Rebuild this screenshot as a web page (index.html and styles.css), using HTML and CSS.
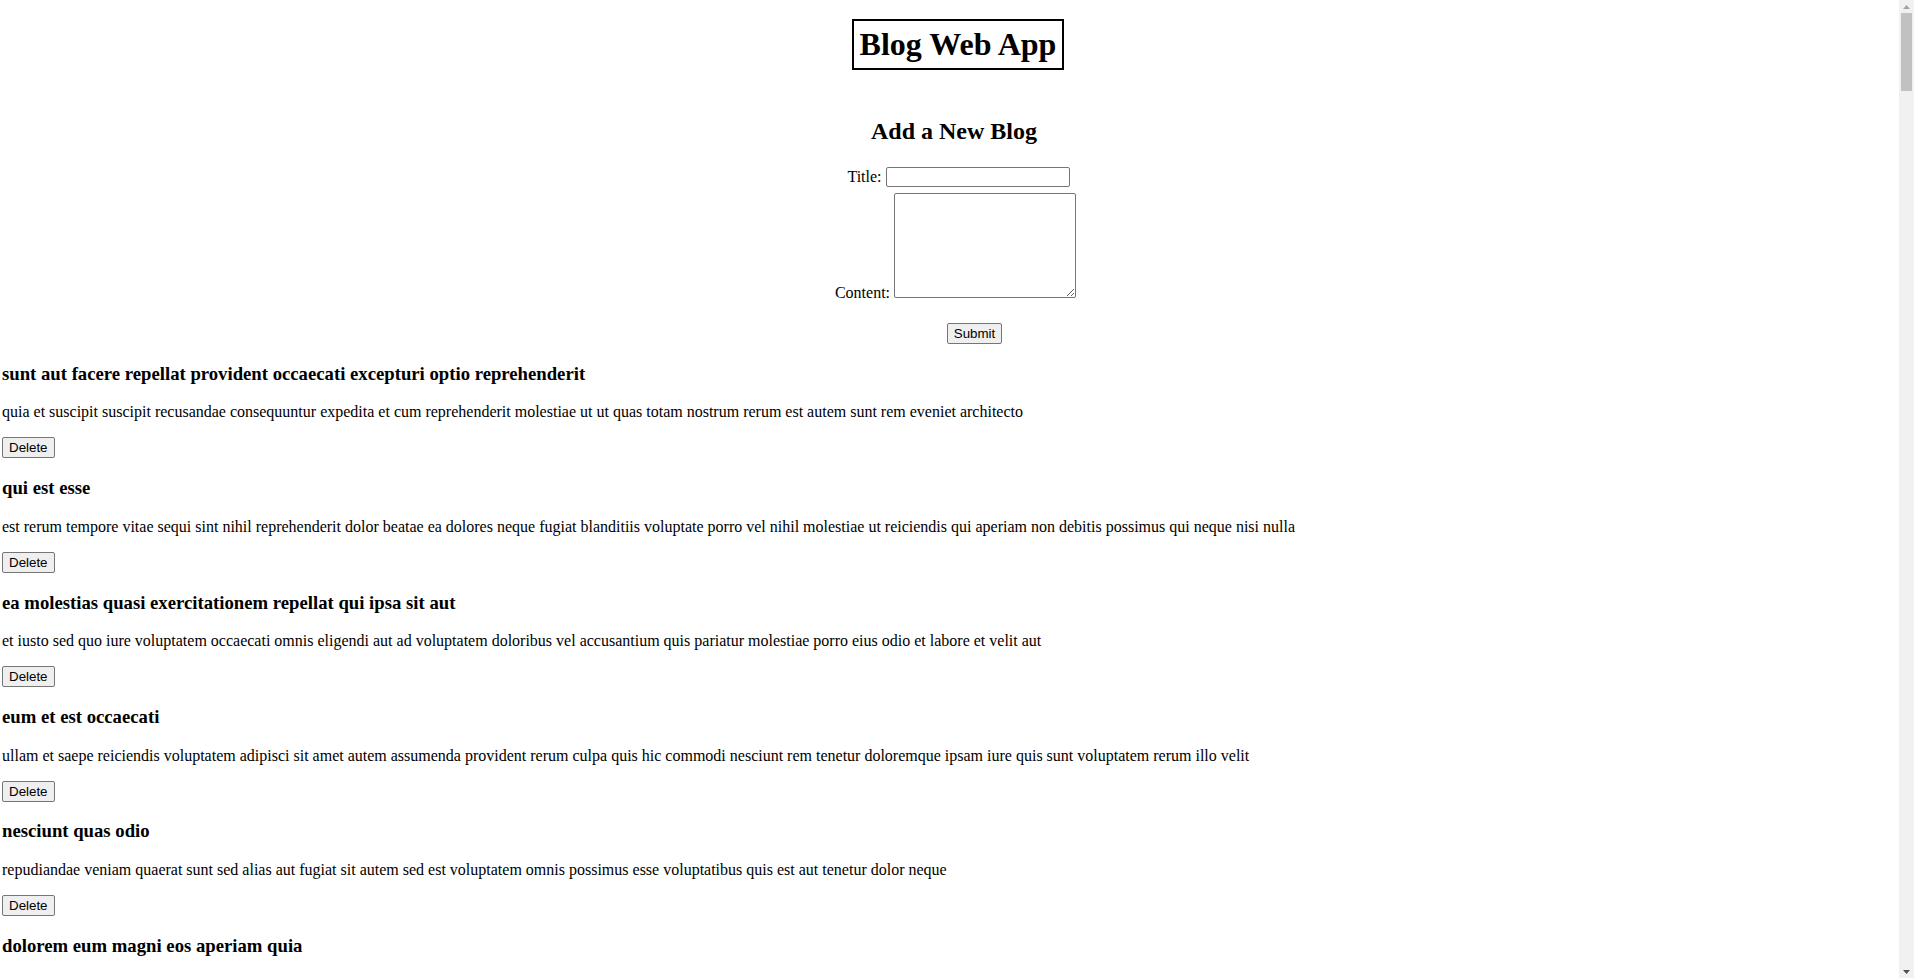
FILE: index.html
```html
<!DOCTYPE html>
<html lang="en">
<head>
<meta charset="utf-8">
<title>Blog Web App</title>
<link rel="stylesheet" href="styles.css">
</head>
<body>
<div class="window">
<div class="app">
  <header class="masthead"><h1 class="brand">Blog Web App</h1></header>
  <section class="composer">
    <h2 class="composer-title">Add a New Blog</h2>
    <form class="composer-form">
      <div class="field field-title"><label class="field-label">Title:</label> <input class="title-input" type="text"></div>
      <div class="field field-content"><label class="field-label">Content:</label> <textarea class="content-input"></textarea></div>
      <div class="field field-submit"><button class="btn" type="button">Submit</button></div>
    </form>
  </section>
  <div class="posts">
    <article class="post"><h3>sunt aut facere repellat provident occaecati excepturi optio reprehenderit</h3><p>quia et suscipit suscipit recusandae consequuntur expedita et cum reprehenderit molestiae ut ut quas totam nostrum rerum est autem sunt rem eveniet architecto</p><button class="btn" type="button">Delete</button></article>
    <article class="post"><h3>qui est esse</h3><p>est rerum tempore vitae sequi sint nihil reprehenderit dolor beatae ea dolores neque fugiat blanditiis voluptate porro vel nihil molestiae ut reiciendis qui aperiam non debitis possimus qui neque nisi nulla</p><button class="btn" type="button">Delete</button></article>
    <article class="post"><h3>ea molestias quasi exercitationem repellat qui ipsa sit aut</h3><p>et iusto sed quo iure voluptatem occaecati omnis eligendi aut ad voluptatem doloribus vel accusantium quis pariatur molestiae porro eius odio et labore et velit aut</p><button class="btn" type="button">Delete</button></article>
    <article class="post"><h3>eum et est occaecati</h3><p>ullam et saepe reiciendis voluptatem adipisci sit amet autem assumenda provident rerum culpa quis hic commodi nesciunt rem tenetur doloremque ipsam iure quis sunt voluptatem rerum illo velit</p><button class="btn" type="button">Delete</button></article>
    <article class="post"><h3>nesciunt quas odio</h3><p>repudiandae veniam quaerat sunt sed alias aut fugiat sit autem sed est voluptatem omnis possimus esse voluptatibus quis est aut tenetur dolor neque</p><button class="btn" type="button">Delete</button></article>
    <article class="post"><h3>dolorem eum magni eos aperiam quia</h3><p>ut aspernatur corporis harum nihil quis provident sequi mollitia nobis aliquid molestiae perspiciatis et ea nemo ab reprehenderit accusantium quas voluptate dolores velit et doloremque molestiae</p><button class="btn" type="button">Delete</button></article>
    <article class="post"><h3>magnam facilis autem</h3><p>dolore placeat quibusdam ea quo vitae magni quis enim qui quis quo nemo aut saepe quidem repellat excepturi ut quia sunt ut sequi eos ea sed quas</p><button class="btn" type="button">Delete</button></article>
    <article class="post"><h3>dolorem dolore est ipsam</h3><p>dignissimos aperiam dolorem qui eum facilis quibusdam animi sint suscipit qui sint possimus cum quaerat magni maiores excepturi ipsam ut commodi dolor voluptatum modi aut vitae</p><button class="btn" type="button">Delete</button></article>
    <article class="post"><h3>nesciunt iure omnis dolorem tempora et accusantium</h3><p>consectetur animi nesciunt iure dolore enim quia ad veniam autem ut quam aut nobis et est aut quod aut provident voluptas autem voluptas</p><button class="btn" type="button">Delete</button></article>
    <article class="post"><h3>optio molestias id quia eum</h3><p>quo et expedita modi cum officia vel magni doloribus qui repudiandae vero nisi sit quos veniam quod sed accusamus veritatis error</p><button class="btn" type="button">Delete</button></article>
    <article class="post"><h3>et ea vero quia laudantium autem</h3><p>delectus reiciendis molestiae occaecati non minima eveniet qui voluptatibus accusamus in eum beatae sit vel qui neque voluptates ut commodi qui incidunt ut animi commodi</p><button class="btn" type="button">Delete</button></article>
    <article class="post"><h3>in quibusdam tempore odit est dolorem</h3><p>itaque id aut magnam praesentium quia et ea odit et ea voluptas et sapiente quia nihil amet occaecati quia id voluptatem incidunt ea est distinctio odio</p><button class="btn" type="button">Delete</button></article>
    <article class="post"><h3>dolorum ut in voluptas mollitia et saepe quo animi</h3><p>aut dicta possimus sint mollitia voluptas commodi quo doloremque iste corrupti reiciendis voluptatem eius rerum sit cumque quod eligendi laborum minima perferendis recusandae assumenda consectetur porro architecto ipsum ipsam</p><button class="btn" type="button">Delete</button></article>
    <article class="post"><h3>voluptatem eligendi optio</h3><p>fuga et accusamus dolorum perferendis illo voluptas non doloremque neque facere ad qui dolorum molestiae beatae sed aut voluptas totam sit illum</p><button class="btn" type="button">Delete</button></article>
    <article class="post"><h3>eveniet quod temporibus</h3><p>reprehenderit quos placeat velit minima officia dolores impedit repudiandae molestiae nam voluptas recusandae quis delectus officiis harum fugiat vitae</p><button class="btn" type="button">Delete</button></article>
    <article class="post"><h3>sint suscipit perspiciatis velit dolorum rerum ipsa laboriosam odio</h3><p>suscipit nam nisi quo aperiam aut asperiores eos fugit maiores voluptatibus quia voluptatem quis ullam qui in alias quia est consequatur magni mollitia accusamus ea nisi voluptate dicta</p><button class="btn" type="button">Delete</button></article>
    <article class="post"><h3>fugit voluptas sed molestias voluptatem provident</h3><p>eos voluptas et aut odit natus earum aspernatur fuga molestiae ullam deserunt ratione qui eos qui nihil ratione nemo velit ut aut id quo</p><button class="btn" type="button">Delete</button></article>
    <article class="post"><h3>voluptate et itaque vero tempora molestiae</h3><p>eveniet quo quis laborum totam consequatur non dolor ut et est repudiandae est voluptatem vel debitis et magnam</p><button class="btn" type="button">Delete</button></article>
    <article class="post"><h3>adipisci placeat illum aut reiciendis qui</h3><p>illum quis cupiditate provident sit magnam ea sed aut omnis veniam maiores ullam consequatur atque adipisci quo iste expedita sit quos voluptas</p><button class="btn" type="button">Delete</button></article>
    <article class="post"><h3>doloribus ad provident suscipit at</h3><p>qui consequuntur ducimus possimus quisquam amet similique suscipit porro ipsam amet eos veritatis officiis exercitationem vel fugit aut necessitatibus totam omnis rerum consequatur expedita quidem cumque explicabo</p><button class="btn" type="button">Delete</button></article>
    <article class="post"><h3>asperiores ea ipsam voluptatibus modi minima quia sint</h3><p>repellat aliquid praesentium dolorem quo sed totam minus non itaque nihil labore molestiae sunt dolor eveniet hic recusandae veniam tempora et tenetur expedita sunt</p><button class="btn" type="button">Delete</button></article>
    <article class="post"><h3>dolor sint quo a velit explicabo quia nam</h3><p>eos qui et ipsum ipsam suscipit aut sed omnis non odio expedita earum mollitia molestiae aut atque rem suscipit nam impedit esse</p><button class="btn" type="button">Delete</button></article>
    <article class="post"><h3>maxime id vitae nihil numquam</h3><p>veritatis unde neque eligendi quae quod architecto quo neque vitae est illo sit tempora doloremque fugit quod et et vel beatae sequi ullam sed tenetur perspiciatis</p><button class="btn" type="button">Delete</button></article>
    <article class="post"><h3>autem hic labore sunt dolores incidunt</h3><p>enim et ex nulla omnis voluptas quia qui voluptatem consequatur numquam aliquam sunt totam recusandae id dignissimos aut sed asperiores deserunt</p><button class="btn" type="button">Delete</button></article>
    <article class="post"><h3>rem alias distinctio quo quis</h3><p>ullam consequatur ut omnis quis sit vel consequuntur ipsa eligendi ipsum molestiae et omnis error nostrum molestiae illo tempore quia et distinctio</p><button class="btn" type="button">Delete</button></article>
    <article class="post"><h3>est et quae odit qui non</h3><p>similique esse doloribus nihil accusamus omnis dolorem fuga consequuntur reprehenderit fugit recusandae temporibus perspiciatis cum ut laudantium omnis aut molestiae vel vero</p><button class="btn" type="button">Delete</button></article>
    <article class="post"><h3>quasi id et eos tenetur aut quo autem</h3><p>eum sed dolores ipsam sint possimus debitis occaecati debitis qui qui facere sapiente voluptatibus consectetur modi et quo animi ut corrupti</p><button class="btn" type="button">Delete</button></article>
    <article class="post"><h3>delectus ullam et corporis nulla voluptas sequi</h3><p>non et quaerat ex quae ad maiores maiores recusandae totam aut blanditiis mollitia quas illo ut voluptatibus voluptatem similique nostrum eum</p><button class="btn" type="button">Delete</button></article>
    <article class="post"><h3>iusto eius quod necessitatibus culpa ea</h3><p>odit magnam ut saepe sed non qui tempora atque nihil accusamus illum doloribus illo dolor eligendi repudiandae odit magni similique sed cum maiores</p><button class="btn" type="button">Delete</button></article>
    <article class="post"><h3>a quo magni similique perferendis</h3><p>alias dolor cumque impedit blanditiis non eveniet odio maxime blanditiis amet eius quis tempora quia autem rem a provident perspiciatis quia</p><button class="btn" type="button">Delete</button></article>
    <article class="post"><h3>ullam ut quidem id aut vel consequuntur</h3><p>debitis eius sed quibusdam non quis consectetur vitae impedit ut qui consequatur sed aut in quidem sit nostrum et maiores adipisci atque quaerat voluptatem adipisci repudiandae</p><button class="btn" type="button">Delete</button></article>
    <article class="post"><h3>doloremque illum aliquid sunt</h3><p>deserunt eos nobis asperiores et hic est debitis repellat molestiae optio nihil ratione ut eos beatae quibusdam distinctio maiores earum voluptates et aut adipisci ea maiores voluptas maxime</p><button class="btn" type="button">Delete</button></article>
    <article class="post"><h3>qui explicabo molestiae dolorem</h3><p>rerum ut et numquam laborum odit est sit id qui sint in quasi tenetur tempore aperiam et quaerat qui in rerum officiis sequi cumque quod</p><button class="btn" type="button">Delete</button></article>
    <article class="post"><h3>magnam ut rerum iure</h3><p>ea velit perferendis earum ut voluptatem voluptate itaque iusto totam pariatur in nemo voluptatem voluptatem autem magni tempora minima in est distinctio qui assumenda accusamus dignissimos officia nesciunt nobis</p><button class="btn" type="button">Delete</button></article>
    <article class="post"><h3>id nihil consequatur molestias animi provident</h3><p>nisi error delectus possimus ut eligendi vitae placeat eos harum cupiditate facilis reprehenderit voluptatem beatae modi ducimus quo illum voluptas eligendi et nobis quia fugit</p><button class="btn" type="button">Delete</button></article>
    <article class="post"><h3>fuga nam accusamus voluptas reiciendis itaque</h3><p>ad mollitia et omnis minus architecto odit voluptas doloremque dolor aut et aut quisquam ea et esse et vel dolorum fuga nulla rerum fugit</p><button class="btn" type="button">Delete</button></article>
    <article class="post"><h3>provident vel ut sit ratione est</h3><p>debitis et eaque non officia sed nesciunt pariatur vel voluptatem iste vero et ea numquam aut expedita ipsum nulla in voluptates omnis consequatur aut enim officiis in quam qui</p><button class="btn" type="button">Delete</button></article>
    <article class="post"><h3>explicabo et eos deleniti nostrum ab id repellendus</h3><p>animi esse sit aut sit nesciunt assumenda eum voluptas quia voluptatibus provident quia necessitatibus ea rerum repudiandae quia voluptatem delectus fugit aut id quia ratione optio eos iusto veniam iure</p><button class="btn" type="button">Delete</button></article>
    <article class="post"><h3>eos dolorem iste accusantium est eaque quam</h3><p>corporis rerum ducimus vel eum accusantium maxime aspernatur a porro possimus iste omnis est in deleniti asperiores fuga aut voluptas sapiente vel dolore minus voluptatem incidunt ex</p><button class="btn" type="button">Delete</button></article>
    <article class="post"><h3>enim quo cumque</h3><p>ut voluptatum aliquid illo tenetur nemo sequi quo facilis ipsum rem optio mollitia quas voluptatem eum voluptas qui unde omnis voluptatem iure quasi maxime voluptas nam</p><button class="btn" type="button">Delete</button></article>
    <article class="post"><h3>non est facere</h3><p>molestias id nostrum excepturi molestiae dolore omnis repellendus quaerat saepe consectetur iste quaerat tenetur asperiores accusamus ex ut nam quidem est ducimus sunt debitis saepe</p><button class="btn" type="button">Delete</button></article>
    <article class="post"><h3>commodi ullam sint et excepturi error explicabo praesentium voluptas</h3><p>odio fugit voluptatum ducimus earum autem est incidunt voluptatem odit reiciendis aliquam sunt sequi nulla dolorem non facere repellendus voluptates quia ratione harum vitae ut</p><button class="btn" type="button">Delete</button></article>
    <article class="post"><h3>eligendi iste nostrum consequuntur adipisci praesentium sit beatae perferendis</h3><p>similique fugit est illum et dolorum harum et voluptate eaque quidem exercitationem quos nam commodi possimus cum odio nihil nulla dolorum exercitationem magnam ex et a et distinctio debitis</p><button class="btn" type="button">Delete</button></article>
    <article class="post"><h3>optio dolor molestias sit</h3><p>temporibus est consectetur dolore et libero debitis vel velit laboriosam quia ipsum quibusdam qui itaque fuga rem aut ea et iure quam sed maxime ut distinctio quae</p><button class="btn" type="button">Delete</button></article>
    <article class="post"><h3>ut numquam possimus omnis eius suscipit laudantium iure</h3><p>est natus reiciendis nihil possimus aut provident ex et dolor repellat pariatur est nobis rerum repellendus dolorem autem</p><button class="btn" type="button">Delete</button></article>
    <article class="post"><h3>aut quo modi neque nostrum ducimus</h3><p>voluptatem quisquam iste voluptatibus natus officiis facilis dolorem quis quas ipsam vel et voluptatum in aliquid</p><button class="btn" type="button">Delete</button></article>
    <article class="post"><h3>quibusdam cumque rem aut deserunt</h3><p>voluptatem assumenda ut qui ut cupiditate aut impedit veniam occaecati nemo illum voluptatem laudantium molestiae beatae rerum ea iure soluta nostrum eligendi et voluptate</p><button class="btn" type="button">Delete</button></article>
    <article class="post"><h3>ut voluptatem illum ea doloribus itaque eos</h3><p>voluptates quo voluptatem facilis iure occaecati vel assumenda rerum officia et illum perspiciatis ab deleniti laudantium repellat ad ut et autem reprehenderit</p><button class="btn" type="button">Delete</button></article>
    <article class="post"><h3>laborum non sunt aut ut assumenda perspiciatis voluptas</h3><p>inventore ab sint natus fugit id nulla sequi architecto nihil quaerat eos tenetur in in eum veritatis non quibusdam officiis aspernatur cumque aut commodi aut</p><button class="btn" type="button">Delete</button></article>
    <article class="post"><h3>repellendus qui recusandae incidunt voluptates tenetur qui omnis exercitationem</h3><p>error suscipit maxime adipisci consequuntur recusandae voluptas eligendi et est et voluptates quia distinctio ab amet quaerat molestiae et vitae adipisci impedit sequi nesciunt quis consectetur</p><button class="btn" type="button">Delete</button></article>
    <article class="post"><h3>soluta aliquam aperiam consequatur illo quis voluptas</h3><p>sunt dolores aut doloribus dolore doloribus voluptates tempora et doloremque et quo quia quasi magnam iste aut dolorem sed maiores</p><button class="btn" type="button">Delete</button></article>
    <article class="post"><h3>qui enim et consequuntur quia animi quis voluptate quibusdam</h3><p>iusto est quibusdam fuga quas quaerat molestias a enim ut sit accusamus enim temporibus iusto accusantium provident architecto soluta esse reprehenderit qui laborum</p><button class="btn" type="button">Delete</button></article>
    <article class="post"><h3>ut quo aut ducimus alias</h3><p>minima harum praesentium eum rerum illo dolore quasi exercitationem rerum nam porro quis neque quo consequatur minima dolor quis dolorum consequatur eum nesciunt</p><button class="btn" type="button">Delete</button></article>
    <article class="post"><h3>sit asperiores ipsam eveniet odio non quia</h3><p>totam corporis dignissimos vitae dolorem ut occaecati accusamus ex velit deserunt et exercitationem vero incidunt corrupti mollitia</p><button class="btn" type="button">Delete</button></article>
    <article class="post"><h3>sit vel voluptatem et non libero</h3><p>debitis excepturi ea perferendis harum libero optio eos accusamus cum fuga ut sapiente repudiandae et ut incidunt omnis molestiae nihil ut eum odit</p><button class="btn" type="button">Delete</button></article>
    <article class="post"><h3>qui et at rerum necessitatibus</h3><p>aut est omnis dolores neque rerum quod ea rerum velit pariatur beatae excepturi et provident voluptas corrupti corporis harum reprehenderit dolores eligendi</p><button class="btn" type="button">Delete</button></article>
    <article class="post"><h3>sed ab est est</h3><p>at pariatur consequuntur earum quidem quo est laudantium soluta voluptatem qui ullam et est et cum voluptas voluptatum repellat est</p><button class="btn" type="button">Delete</button></article>
    <article class="post"><h3>voluptatum itaque dolores nisi et quasi</h3><p>veniam voluptatum quae adipisci id et id quia eos ad et dolorem aliquam quo nisi sunt eos impedit error ad similique veniam</p><button class="btn" type="button">Delete</button></article>
    <article class="post"><h3>qui commodi dolor at maiores et quis id accusantium</h3><p>perspiciatis et quam ea autem temporibus non voluptatibus qui beatae a earum officia nesciunt dolores suscipit voluptas et animi doloribus cum rerum quas et magni et hic ut ut commodi</p><button class="btn" type="button">Delete</button></article>
    <article class="post"><h3>consequatur placeat omnis quisquam quia reprehenderit fugit veritatis facere</h3><p>asperiores sunt ab assumenda cumque modi velit qui esse omnis voluptate et fuga perferendis voluptas illo ratione amet aut et omnis</p><button class="btn" type="button">Delete</button></article>
    <article class="post"><h3>voluptatem doloribus consectetur est ut ducimus</h3><p>ab nemo optio odio delectus tenetur corporis similique nobis repellendus rerum omnis facilis vero blanditiis debitis in nesciunt doloribus dicta dolores magnam minus velit</p><button class="btn" type="button">Delete</button></article>
    <article class="post"><h3>beatae enim quia vel</h3><p>enim aspernatur illo distinctio quae praesentium beatae alias amet delectus qui voluptate distinctio odit sint accusantium autem omnis quo molestiae omnis ea eveniet optio</p><button class="btn" type="button">Delete</button></article>
    <article class="post"><h3>voluptas blanditiis repellendus animi ducimus error sapiente et suscipit</h3><p>enim adipisci aspernatur nemo numquam omnis facere dolorem dolor ex quis temporibus incidunt ab delectus culpa quo reprehenderit blanditiis asperiores accusantium ut quam in voluptatibus voluptas ipsam dicta</p><button class="btn" type="button">Delete</button></article>
    <article class="post"><h3>et fugit quas eum in in aperiam quod</h3><p>id velit blanditiis eum ea voluptatem molestiae sint occaecati est eos perspiciatis incidunt a error provident eaque aut aut qui</p><button class="btn" type="button">Delete</button></article>
    <article class="post"><h3>consequatur id enim sunt et et</h3><p>voluptatibus ex esse sint explicabo est aliquid cumque adipisci fuga repellat labore molestiae corrupti ex saepe at asperiores et perferendis natus id esse incidunt pariatur</p><button class="btn" type="button">Delete</button></article>
    <article class="post"><h3>repudiandae ea animi iusto</h3><p>officia veritatis tenetur vero qui itaque sint non ratione sed et ut asperiores iusto eos molestiae nostrum veritatis quibusdam et nemo iusto saepe</p><button class="btn" type="button">Delete</button></article>
    <article class="post"><h3>aliquid eos sed fuga est maxime repellendus</h3><p>reprehenderit id nostrum voluptas doloremque pariatur sint et accusantium quia quod aspernatur et fugiat amet non sapiente et consequatur necessitatibus molestiae</p><button class="btn" type="button">Delete</button></article>
    <article class="post"><h3>odio quis facere architecto reiciendis optio</h3><p>magnam molestiae perferendis quisquam qui cum reiciendis quaerat animi amet hic inventore ea quia deleniti quidem saepe porro velit</p><button class="btn" type="button">Delete</button></article>
    <article class="post"><h3>fugiat quod pariatur odit minima</h3><p>officiis error culpa consequatur modi asperiores et dolorum assumenda voluptas et vel qui aut vel rerum voluptatum quisquam perspiciatis quia rerum consequatur totam quas sequi commodi repudiandae asperiores et saepe a</p><button class="btn" type="button">Delete</button></article>
    <article class="post"><h3>voluptatem laborum magni</h3><p>sunt repellendus quae est asperiores aut deleniti esse accusamus repellendus quia aut quia dolorem unde eum tempora esse dolore</p><button class="btn" type="button">Delete</button></article>
    <article class="post"><h3>et iusto veniam et illum aut fuga</h3><p>occaecati a doloribus iste saepe consectetur placeat eum voluptate dolorem et qui quo quia voluptas rerum ut id enim velit est perferendis</p><button class="btn" type="button">Delete</button></article>
    <article class="post"><h3>sint hic doloribus consequatur eos non id</h3><p>quam occaecati qui deleniti consectetur consequatur aut facere quas exercitationem aliquam hic voluptas neque id sunt ut aut accusamus sunt consectetur expedita inventore velit</p><button class="btn" type="button">Delete</button></article>
    <article class="post"><h3>consequuntur deleniti eos quia temporibus ab aliquid at</h3><p>voluptatem cumque tenetur consequatur expedita ipsum nemo quia explicabo aut eum minima consequatur tempore cumque quae est et et in consequuntur voluptatem voluptates aut</p><button class="btn" type="button">Delete</button></article>
    <article class="post"><h3>enim unde ratione doloribus quas enim ut sit sapiente</h3><p>odit qui et et necessitatibus sint veniam mollitia amet doloremque molestiae commodi similique magnam et quam blanditiis est itaque quo et tenetur ratione occaecati molestiae tempora</p><button class="btn" type="button">Delete</button></article>
    <article class="post"><h3>dignissimos eum dolor ut enim et delectus in</h3><p>commodi non non omnis et voluptas sit autem aut nobis magnam et sapiente voluptatem et laborum repellat qui delectus facilis temporibus rerum amet et nemo voluptate expedita adipisci error dolorem</p><button class="btn" type="button">Delete</button></article>
    <article class="post"><h3>doloremque officiis ad et non perferendis</h3><p>ut animi facere totam iusto tempore molestiae eum aut et dolorem aperiam quaerat recusandae totam odio</p><button class="btn" type="button">Delete</button></article>
    <article class="post"><h3>necessitatibus quasi exercitationem odio</h3><p>modi ut in nulla repudiandae dolorum nostrum eos aut consequatur omnis ut incidunt est omnis iste et quam voluptates sapiente aliquam asperiores nobis amet corrupti repudiandae provident</p><button class="btn" type="button">Delete</button></article>
    <article class="post"><h3>quam voluptatibus rerum veritatis</h3><p>nobis facilis odit tempore cupiditate quia assumenda doloribus rerum qui ea illum et qui totam aut veniam repellendus</p><button class="btn" type="button">Delete</button></article>
    <article class="post"><h3>pariatur consequatur quia magnam autem omnis non amet</h3><p>libero accusantium et et facere incidunt sit dolorem non excepturi qui quia sed laudantium quisquam molestiae ipsum perspiciatis nisi quod officiis eveniet</p><button class="btn" type="button">Delete</button></article>
    <article class="post"><h3>labore in ex et explicabo corporis aut quas</h3><p>ex quod dolorem ea eum iure qui provident amet quia qui facere excepturi et repudiandae asperiores molestias provident minus incidunt vero fugit rerum sint sunt excepturi provident</p><button class="btn" type="button">Delete</button></article>
    <article class="post"><h3>tempora rem veritatis voluptas quo dolores vero</h3><p>facere qui nesciunt est voluptatum voluptatem nisi sequi eligendi necessitatibus ea at rerum itaque harum non ratione velit laboriosam quis consequuntur ex officiis minima doloremque voluptas ut aut</p><button class="btn" type="button">Delete</button></article>
    <article class="post"><h3>laudantium voluptate suscipit sunt enim enim</h3><p>ut libero sit aut totam inventore sunt porro sint qui sunt molestiae consequatur cupiditate qui iste ducimus adipisci dolor enim assumenda soluta laboriosam amet iste delectus hic</p><button class="btn" type="button">Delete</button></article>
    <article class="post"><h3>odit et voluptates doloribus alias odio et</h3><p>est molestiae facilis quis tempora numquam nihil qui voluptate sapiente consequatur est qui necessitatibus autem aut ipsa aperiam modi dolore numquam reprehenderit eius rem quibusdam</p><button class="btn" type="button">Delete</button></article>
    <article class="post"><h3>optio ipsam molestias necessitatibus occaecati facilis veritatis dolores aut</h3><p>sint molestiae magni a et quos eaque et quasi ut rerum debitis similique veniam recusandae dignissimos dolor incidunt consequatur odio</p><button class="btn" type="button">Delete</button></article>
    <article class="post"><h3>dolore veritatis porro provident adipisci blanditiis et sunt</h3><p>similique sed nisi voluptas iusto omnis mollitia et quo assumenda suscipit officia magnam sint sed tempora enim provident pariatur praesentium atque animi amet ratione</p><button class="btn" type="button">Delete</button></article>
    <article class="post"><h3>placeat quia et porro iste</h3><p>quasi excepturi consequatur iste autem temporibus sed molestiae beatae et quaerat et esse ut voluptatem occaecati errorperspiciatis ad voluptatem consequatur ut enim</p><button class="btn" type="button">Delete</button></article>
    <article class="post"><h3>nostrum quis quasi placeat</h3><p>eos et molestiae nesciunt ut a dolores perspiciatis repellendus repellat aliquid magnam sint rem ipsum est</p><button class="btn" type="button">Delete</button></article>
    <article class="post"><h3>sapiente omnis fugit eos</h3><p>consequatur omnis est praesentium ducimus non iste neque hic deserunt voluptatibus veniam cum et rerum sed</p><button class="btn" type="button">Delete</button></article>
    <article class="post"><h3>sint soluta et vel magnam aut ut sed qui</h3><p>repellat aut aperiam totam temporibus autem et architecto magnam ut consequatur qui cupiditate rerum quia soluta dignissimos nihil iure tempore quas est</p><button class="btn" type="button">Delete</button></article>
    <article class="post"><h3>ad iusto omnis odit dolor voluptatibus</h3><p>minus omnis soluta quia qui sed adipisci voluptates illum ipsam voluptatem eligendi officia ut in eos soluta similique molestias praesentium blanditiis</p><button class="btn" type="button">Delete</button></article>
    <article class="post"><h3>aut amet sed</h3><p>libero voluptate eveniet aperiam sed sunt placeat suscipit molestias similique fugit nam natus expedita consequatur consequatur dolorem similique te</p><button class="btn" type="button">Delete</button></article>
    <article class="post"><h3>ratione ex tenetur perferendis</h3><p>aut et excepturi dicta laudantium sint rerum nihil laudantium et at a neque minima officia et similique libero et commodi voluptate qui</p><button class="btn" type="button">Delete</button></article>
    <article class="post"><h3>beatae soluta recusandae</h3><p>dolorem quibusdam ducimus consequuntur dicta aut quo laboriosam voluptatem quis enim recusandae ut sed sunt nostrum est odit totam sit error sed sunt eveniet provident qui nulla</p><button class="btn" type="button">Delete</button></article>
    <article class="post"><h3>qui qui voluptates illo iste minima</h3><p>aspernatur expedita soluta quo ab ut similique expedita dolores amet sed temporibus distinctio magnam saepe deleniti omnis facilis nam ipsum natus sint similique omnis</p><button class="btn" type="button">Delete</button></article>
    <article class="post"><h3>id minus libero illum nam ad officiis</h3><p>earum voluptatem facere provident blanditiis velit laboriosam pariatur accusamus odio saepe cumque dolor qui a dicta ab doloribus consequatur omnis corporis cupiditate eaque assumenda ad nesciunt</p><button class="btn" type="button">Delete</button></article>
    <article class="post"><h3>quaerat velit veniam amet cupiditate aut numquam ut sequi</h3><p>in non odio excepturi sint eum labore voluptates vitae quia qui et inventore itaque rerum veniam non exercitationem delectus aut</p><button class="btn" type="button">Delete</button></article>
    <article class="post"><h3>quas fugiat ut perspiciatis vero provident</h3><p>eum non blanditiis soluta porro quibusdam voluptas vel voluptatem qui placeat dolores qui velit aut vel inventore aut cumque culpa explicabo aliquid at perspiciatis est et voluptatem dignissimos dolor itaque sit nam</p><button class="btn" type="button">Delete</button></article>
    <article class="post"><h3>laboriosam dolor voluptates</h3><p>doloremque ex facilis sit sint culpa soluta assumenda eligendi non ut eius sequi ducimus vel quasi veritatis est dolores</p><button class="btn" type="button">Delete</button></article>
    <article class="post"><h3>temporibus sit alias delectus eligendi possimus magni</h3><p>quo deleniti praesentium dicta non quod aut est molestias molestias et officia quis nihil itaque dolorem quia</p><button class="btn" type="button">Delete</button></article>
    <article class="post"><h3>at nam consequatur ea labore ea harum</h3><p>cupiditate quo est a modi nesciunt soluta ipsa voluptas error itaque dicta in autem qui minus magnam et distinctio eum accusamus ratione error aut</p><button class="btn" type="button">Delete</button></article>
  </div>
</div>
<div class="scrollbar" aria-hidden="true">
  <div class="sb-arrow sb-arrow-up"><svg width="7" height="4" viewBox="0 0 7 4"><path d="M0 4 L3.5 0 L7 4 Z" fill="#a3a3a3"/></svg></div>
  <div class="sb-thumb"></div>
  <div class="sb-track"></div>
  <div class="sb-arrow sb-arrow-down"><svg width="7" height="4" viewBox="0 0 7 4"><path d="M0 0 L7 0 L3.5 4 Z" fill="#505050"/></svg></div>
</div>
</div>
</body>
</html>
```
FILE: styles.css
```css
html, body {
  margin: 0;
  padding: 0;
  height: 100%;
  overflow: hidden;
  background: #ffffff;
  color: #000000;
  font-family: "Liberation Serif", "Times New Roman", serif;
  font-size: 16px;
}

.window {
  display: flex;
  height: 100vh;
}

.app {
  flex: 1 1 auto;
  min-width: 0;
  height: 100vh;
  overflow-y: auto;
}

.scrollbar {
  flex: 0 0 15px;
  width: 15px;
  height: 100vh;
  display: flex;
  flex-direction: column;
  background: #f1f1f1;
}

.sb-arrow {
  flex: 0 0 13px;
  display: flex;
  align-items: center;
  justify-content: center;
}

.sb-arrow svg {
  display: block;
}

.sb-thumb {
  flex: 0 0 78px;
  margin: 0 2px;
  background: #c1c1c1;
}

.sb-track {
  flex: 1 1 auto;
}

.masthead {
  text-align: center;
  padding-left: 17px;
}

.brand {
  display: inline-block;
  margin: 19px 0 0;
  padding: 5px 6px;
  border: 2px solid #000000;
  font-size: 32px;
  font-weight: bold;
}

.composer {
  text-align: center;
}

.composer-title {
  margin: 48px 0 22px;
  padding-left: 9px;
  font-size: 24px;
  font-weight: bold;
}

.composer-form {
  margin: 0;
}

.field-title {
  padding-left: 18px;
}

.field-content {
  padding-left: 12px;
  margin-top: 6px;
}

.field-submit {
  padding-left: 50px;
  margin-top: 21px;
}

.title-input {
  box-sizing: border-box;
  width: 184px;
  height: 20px;
  margin: 0;
  padding: 1px 2px;
  border: 1px solid #767676;
  border-radius: 2px;
  font: 13.333px "Liberation Sans", Arial, sans-serif;
  vertical-align: baseline;
}

.content-input {
  box-sizing: border-box;
  width: 182px;
  height: 105px;
  margin: 0;
  padding: 2px;
  border: 1px solid #767676;
  border-radius: 2px;
  font: 13.333px "Liberation Mono", monospace;
  vertical-align: baseline;
}

.btn {
  margin: 0;
  padding: 2px 6px;
  border: 1px solid #767676;
  border-radius: 2px;
  background: #efefef;
  color: #000000;
  font: 13.333px "Liberation Sans", Arial, sans-serif;
}

.posts {
  padding: 0 2px;
}

.post h3 {
  margin: 18.72px 0;
  font-size: 18.72px;
  font-weight: bold;
}

.post p {
  margin: 16px 0;
}
```
